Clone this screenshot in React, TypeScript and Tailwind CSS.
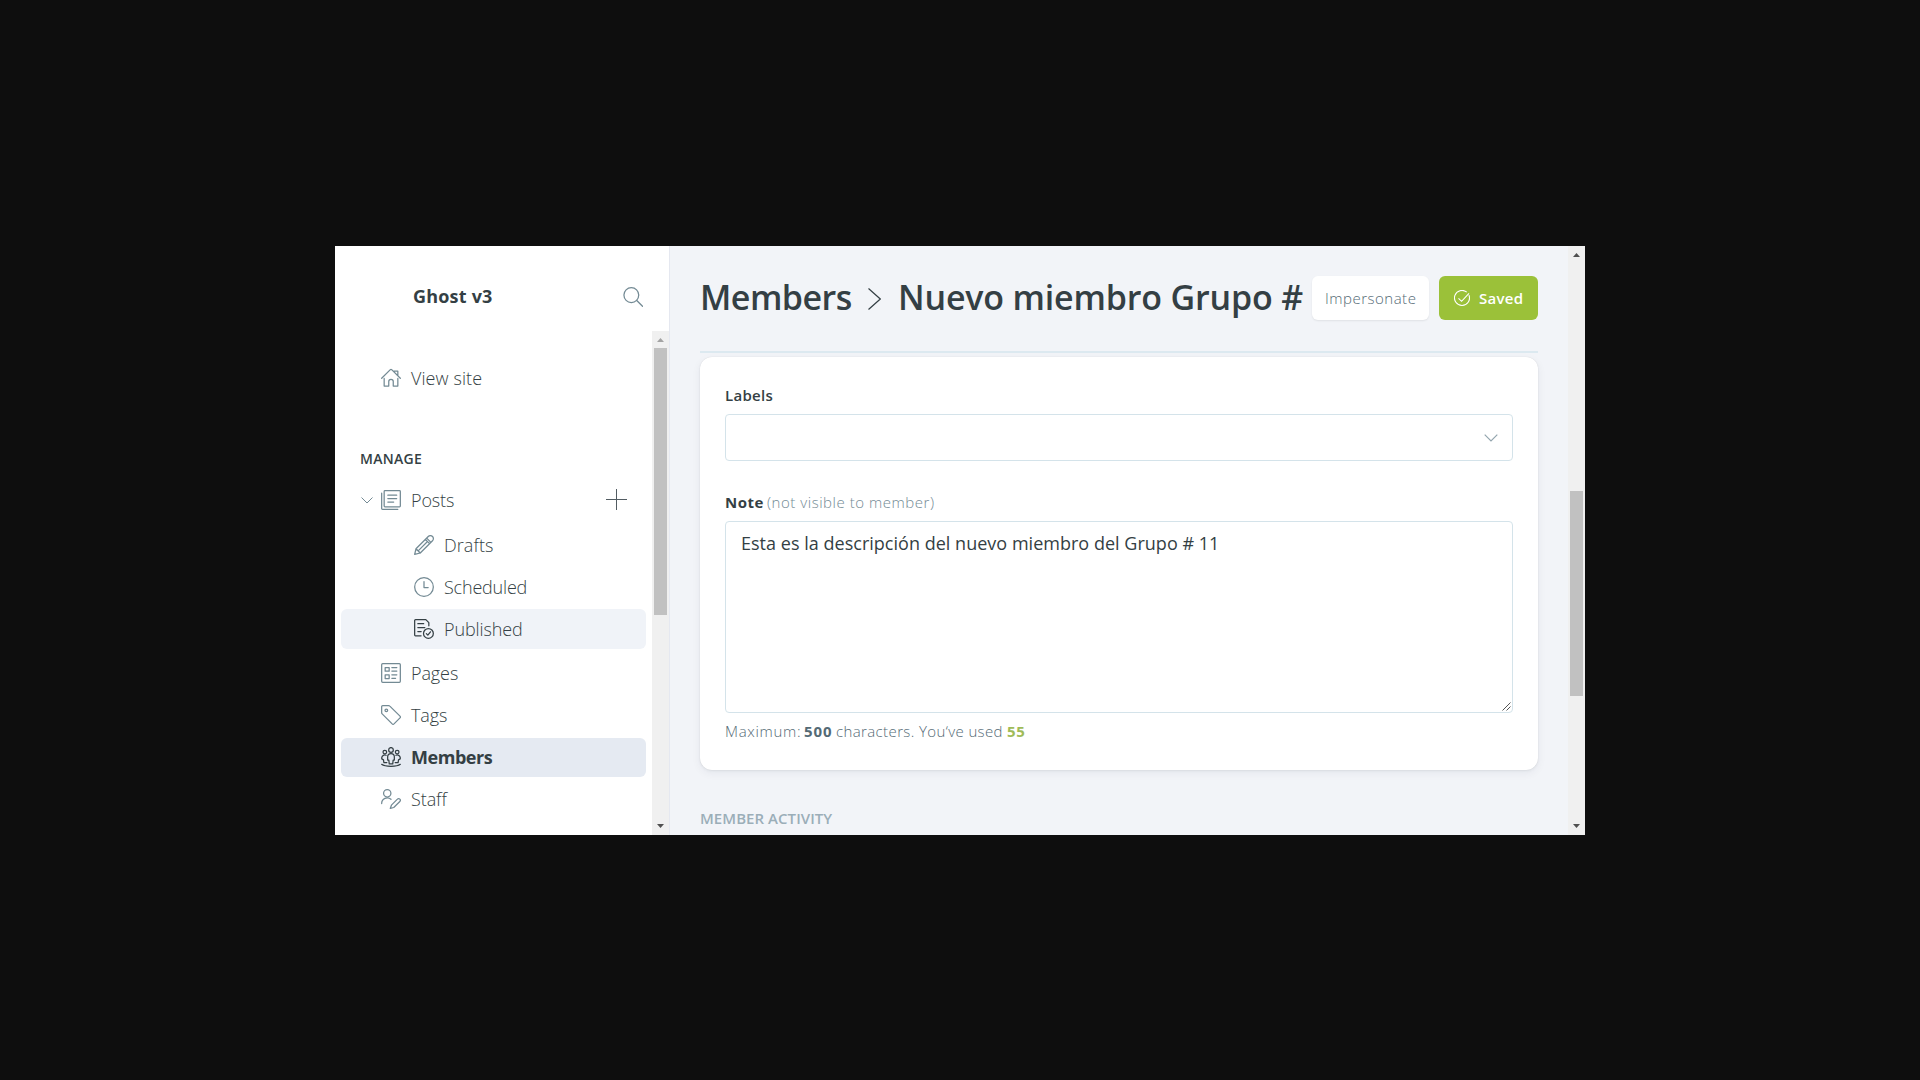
import type { ReactNode } from "react";

const Icon = ({ children, className = "" }: { children: ReactNode; className?: string }) => (
  <svg
    viewBox="0 0 24 24"
    fill="none"
    stroke="currentColor"
    strokeWidth="1.5"
    strokeLinecap="round"
    strokeLinejoin="round"
    className={"h-5 w-5 shrink-0 " + className}
  >
    {children}
  </svg>
);

const Home = () => (
  <Icon>
    <path d="M.8 12.3 11.2 2a1.2 1.2 0 0 1 1.6 0l10.4 10.3M3.8 12.5v9.2h5.5v-5.5a2.7 2.7 0 0 1 5.4 0v5.5h5.5v-9.2M15.5 3.8h4.7v5" />
  </Icon>
);
const Posts = () => (
  <Icon>
    <rect x="3.8" y=".8" width="19.4" height="19.4" rx="1" />
    <path d="M.8 3.8v18.4a1 1 0 0 0 1 1h18.4M8.2 6.2h10.6M8.2 10.3h10.6M8.2 14.4h7" />
  </Icon>
);
const Pencil = () => (
  <Icon>
    <path d="M22.2 1.8a3.6 3.6 0 0 0-5.1 0L2.4 16.5.8 23.2l6.7-1.6L22.2 6.9a3.6 3.6 0 0 0 0-5.1zM15.2 3.7l5.1 5.1M13.6 5.3l5.1 5.1M2.4 16.5l5.1 5.1M16.2 7.8 5 19" />
  </Icon>
);
const Clock = () => (
  <Icon>
    <circle cx="12" cy="12" r="11.2" />
    <path d="M12 5.5V12.6h5" />
  </Icon>
);
const Published = () => (
  <Icon>
    <path d="M8.5 20.2H1.8a1 1 0 0 1-1-1V1.8a1 1 0 0 1 1-1h12.4l3.6 3.6v3.8M4.6 5.6h7M4.6 10.3h8.4M4.6 15h4" />
    <circle cx="17.3" cy="17.3" r="5.9" />
    <path d="m14.8 17.6 1.8 1.8 3.2-4" />
  </Icon>
);
const Pages = () => (
  <Icon>
    <rect x=".8" y=".8" width="22.4" height="22.4" rx="1.2" />
    <path d="M5 5.4h4.8v4.4H5zM5 14.2h4.8v4.4H5zM13 5.4h6M13 9.6h6M13 14.2h6M13 18.4h4.5" />
  </Icon>
);
const Tag = () => (
  <Icon>
    <path d="M.8 2v7.2a2 2 0 0 0 .6 1.4l12 12.1a1.6 1.6 0 0 0 2.2 0l7.2-7.2a1.6 1.6 0 0 0 0-2.2L10.6 1.4A2 2 0 0 0 9.2.8H2A1.2 1.2 0 0 0 .8 2z" />
    <circle cx="6.4" cy="6.4" r="1.6" />
  </Icon>
);
const Members = () => (
  <Icon>
    <circle cx="12" cy="3.5" r="2.8" />
    <circle cx="4.6" cy="6.1" r="2.2" />
    <circle cx="19.4" cy="6.1" r="2.2" />
    <path d="M9.9 20.2l-.5-4.6H8v-3.8a4 4 0 0 1 8 0v3.8h-1.4l-.5 4.6zM7 18.6H3.4L3 15.4 .9 14.2v-1.4a3.7 3.7 0 0 1 5.2-2.9M17 18.6h3.6l.4-3.2 2.1-1.2v-1.4a3.7 3.7 0 0 0-5.2-2.9M.8 20.8c2 1.6 6.2 2.4 11.2 2.4s9.200-.8 11.200-2.400" />
  </Icon>
);
const Staff = () => (
  <Icon>
    <circle cx="7.5" cy="5.2" r="4.4" />
    <path d="M.8 17.500a6.800 6.800 0 0 1 11.200-5.200M22.600 12.200a2 2 0 0 0-2.900 0l-7.200 7.200-1.400 3.900 4.200-1.100 7.300-7.200a2 2 0 0 0 0-2.800z" />
  </Icon>
);

function Item({
  icon,
  label,
  sub,
  row = "h-10",
  text = "tracking-[-0.1px]",
}: {
  icon: ReactNode;
  label: string;
  sub?: boolean;
  row?: string;
  text?: string;
}) {
  return (
    <a
      className={
        "ml-1.5 mr-1.5 flex shrink-0 items-center gap-2.5 rounded-md text-lg leading-5 " +
        (sub ? "pl-[73px] " : "pl-10 ") +
        row
      }
    >
      {icon}
      <span className={text}>{label}</span>
    </a>
  );
}

const Arrow = ({ down, className }: { down?: boolean; className: string }) => (
  <svg viewBox="0 0 7 4" className={"h-1 w-[7px] shrink-0 " + className} fill="currentColor">
    <path d={down ? "M0 0h7L3.500 4z" : "M0 4h7L3.500 0z"} />
  </svg>
);

export default function App() {
  return (
    <div className="flex h-[1080px] w-[1920px] items-start justify-center bg-[#0e0e0e] pt-[246px] font-['Open_Sans',sans-serif] text-[#343f44]">
      <div className="flex h-[589px] w-[1250px] overflow-hidden bg-[#f2f4f8]">
        <aside className="flex w-[335px] shrink-0 flex-col border-r border-[#e5e8f0] bg-white">
          <header className="flex h-[85px] shrink-0 items-center justify-between pl-[78px] pr-[26px] pt-4">
            <span className="-mt-px text-lg font-bold leading-5 tracking-[0.2px]">Ghost v3</span>
            <Icon className="text-[#738a94]">
              <circle cx="10" cy="9.700" r="8.900" />
              <path d="m16.500 16.200 6.900 6.900" />
            </Icon>
          </header>
          <div className="flex min-h-0 flex-1">
            <nav className="flex min-w-0 flex-1 flex-col overflow-hidden pt-[27px] font-light text-[#738a94] [&_a>span]:text-[#343f44]">
              <Item icon={<Home />} label="View site" text="tracking-[0.08px]" />
              <h2 className="ml-[25px] mt-[51px] text-sm font-semibold leading-5 tracking-[0.3px] text-[#343f44]">
                MANAGE
              </h2>
              <div className="mt-[11px] flex h-10 shrink-0 items-center pl-[26px] pr-[25px]">
                <svg viewBox="0 0 12 7" className="h-[7px] w-3" fill="none" stroke="currentColor">
                  <path d="M.5.5 6 6 11.500.5" />
                </svg>
                <a className="ml-2 flex items-center gap-2.5 text-lg leading-5">
                  <Posts />
                  <span className="tracking-[-0.12px]">Posts</span>
                </a>
                <svg viewBox="0 0 21 21" className="-mt-px ml-auto h-[21px] w-[21px] text-[#525c62]" fill="none" stroke="currentColor">
                  <path d="M0 10.500h21M10.500 0v21" />
                </svg>
              </div>
              <Item sub icon={<Pencil />} label="Drafts" row="mt-[5px] h-10" text="tracking-[0.06px]" />
              <Item sub icon={<Clock />} label="Scheduled" row="mt-0.5 h-10" text="tracking-[-0.2px]" />
              <Item
                sub
                icon={<Published />}
                label="Published"
                row="mt-0.5 h-10 bg-[#f0f3f8] text-[#343f44]"
              />
              <Item icon={<Pages />} label="Pages" row="mt-1 h-10" />
              <Item icon={<Tag />} label="Tags" row="mt-0.5 h-10" />
              <Item
                icon={<Members />}
                label="Members"
                row="mt-[3px] h-[39px] bg-[#e5eaf2] pb-px text-[#343f44]"
                text="font-bold tracking-[-0.45px]"
              />
              <Item icon={<Staff />} label="Staff" row="mt-[3px] h-[39px] pb-px" />
            </nav>
            <div className="flex w-[17px] shrink-0 flex-col items-center bg-[#f0f0f0]">
              <Arrow className="mt-[7px] text-[#a3a3a3]" />
              <div className="mt-[6px] h-[267px] w-[13px] shrink-0 bg-[#c1c1c1]" />
              <Arrow down className="mb-[7px] mt-auto text-[#505050]" />
            </div>
          </div>
        </aside>

        <main className="flex min-w-0 flex-1 flex-col pl-[30px] pr-[30px]">
          <header className="flex h-[107px] shrink-0 items-start border-b-2 border-[#dce9f0] pt-[30px]">
            <h1 className="flex h-[42px] items-center whitespace-nowrap text-[34px] font-semibold">
              <span className="w-[168px] tracking-[-0.5px]">Members</span>
              <svg viewBox="0 0 13 22" className="mt-[3px] h-[22px] w-[13px]" fill="none" stroke="currentColor" strokeWidth="1.200">
                <path d="M.5.500 12.300 11 .500 21.500" />
              </svg>
              <span className="ml-[17px] tracking-[-0.17px]">Nuevo miembro Grupo #</span>
            </h1>
            <button className="ml-auto flex h-11 w-[117px] shrink-0 items-center rounded-md bg-white pl-[13px] text-[15px] font-light tracking-[0.5px] text-[#546a75] shadow-[0_1px_2px_rgba(0,0,0,0.08)]">
              Impersonate
            </button>
            <button className="ml-2.5 flex h-11 w-[99px] shrink-0 items-center rounded-md bg-[#9bc139] pl-[15px] text-[15px] font-semibold tracking-[0.3px] text-white">
              <svg viewBox="0 0 16 16" className="mr-[9px] h-4 w-4" fill="none" stroke="currentColor" strokeWidth="1.100">
                <path d="M15 5.300A7.500 7.500 0 1 1 12.800 2.200M4.500 8.300l3.100 3L15 3.300" />
              </svg>
              Saved
            </button>
          </header>

          <section className="mt-1 flex h-[413px] shrink-0 flex-col rounded-xl bg-white px-[25px] pt-7 shadow-[0_0_1px_rgba(0,0,0,0.12),0_3px_10px_rgba(20,30,60,0.06),0_1px_3px_rgba(0,0,0,0.05)]">
            <label className="text-[15px] font-semibold leading-5 tracking-[0.3px]">Labels</label>
            <div className="mt-[9px] flex h-[47px] shrink-0 items-center justify-end rounded border border-[#d4e3ea] pr-3.5">
              <svg viewBox="0 0 14 8" className="mt-px h-2 w-3.5 text-[#93a5ae]" fill="none" stroke="currentColor" strokeWidth="1.200">
                <path d="m.7.7 6.300 6.300 6.300-6.300" />
              </svg>
            </div>
            <label className="mt-[31px] flex text-[15px] leading-5">
              <span className="w-[42px] font-bold tracking-[0.5px]">Note</span>
              <span className="font-light tracking-[0.53px] text-[#738a94]">(not visible to member)</span>
            </label>
            <div className="relative mt-[9px] h-[192px] shrink-0 rounded border border-[#d4e3ea] pl-[15px] pt-[11px] text-lg leading-5 tracking-[0.02px]">
              Esta es la descripción del nuevo miembro del Grupo # 11
              <svg viewBox="0 0 9 9" className="absolute bottom-px right-px h-[9px] w-[9px]" stroke="#555" strokeWidth="1">
                <path d="M.5 8.500l8-8M4.500 8.500l4-4" />
              </svg>
            </div>
            <p className="mt-2 flex whitespace-nowrap text-[15px] font-light leading-5 text-[#546a75]">
              <span className="w-[79px] tracking-[0.7px]">Maximum:</span>
              <b className="w-8 font-bold tracking-[0.9px]">500</b>
              <span className="w-[171px] tracking-[0.38px]">characters. You‘ve used</span>
              <b className="font-bold tracking-[0.6px] text-[#9fbb58]">55</b>
            </p>
          </section>

          <h4 className="mt-[38px] whitespace-nowrap text-[15px] font-semibold leading-5 tracking-[0.05px] text-[#9baeb8]">
            MEMBER ACTIVITY
          </h4>
        </main>

        <div className="flex w-[17px] shrink-0 flex-col items-center bg-[#f0f0f0]">
          <Arrow className="mt-[7px] text-[#505050]" />
          <div className="mt-[234px] h-[205px] w-[13px] shrink-0 bg-[#c1c1c1]" />
          <Arrow down className="mb-[7px] mt-auto text-[#505050]" />
        </div>
      </div>
    </div>
  );
}
